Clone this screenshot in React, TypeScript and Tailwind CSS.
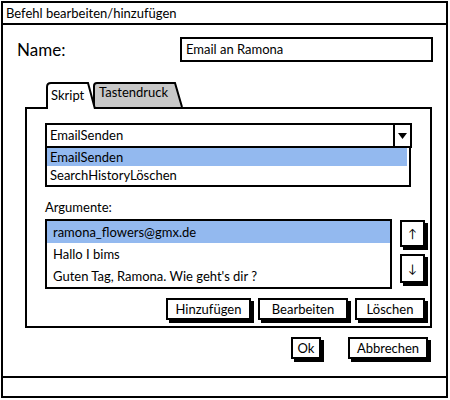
import * as React from 'react';

const Btn: React.FC<{ label: string; w: string }> = ({ label, w }) => (
  <div
    className={`${w} h-[22px] border-2 border-black bg-white shadow-[3px_3px_0_#000] flex items-center justify-center text-[13px] leading-none`}
  >
    {label}
  </div>
);

const App: React.FC = () => {
  return (
    <div className="w-[450px] h-[400px] bg-white p-[1px] text-black font-['Lato','Liberation_Sans',sans-serif]">
      <div className="w-[447px] h-[397px] border-2 border-black flex flex-col">
        {/* title bar */}
        <div className="h-[22px] border-b-2 border-black pl-[3px] text-[13px] leading-[20px]">
          Befehl bearbeiten/hinzufügen
        </div>

        <div className="flex-1 flex flex-col">
          {/* name row */}
          <div className="mt-[12px] h-[25px] flex items-center">
            <div className="ml-[14px] text-[17px] leading-none">Name:</div>
            <div className="ml-auto mr-[13px] w-[253px] h-[25px] border-2 border-black flex items-center px-[4px] text-[13px]">
              Email an Ramona
            </div>
          </div>

          {/* tabs */}
          <div className="mt-[20px] -mb-[2px] ml-[43px] flex items-start">
            <div className="relative z-10 w-[50px] h-[27px]">
              <svg className="absolute inset-0" width="50" height="27" viewBox="0 0 50 27">
                <path d="M1,27 L1,5 Q1,1 5,1 L42,1 L49,27" fill="#fff" stroke="#000" strokeWidth="2" />
              </svg>
              <div className="relative pl-[5px] pt-[7px] text-[13px] leading-none">Skript</div>
            </div>
            <div className="relative -ml-[3px] w-[90px] h-[25px]">
              <svg className="absolute inset-0" width="90" height="25" viewBox="0 0 90 25">
                <path d="M1,25 L1,4 Q1,1 4,1 L82,1 L89,25" fill="#c8c8c8" stroke="#000" strokeWidth="2" />
              </svg>
              <div className="relative pl-[6px] pt-[4px] text-[13px] leading-none">Tastendruck</div>
            </div>
          </div>

          {/* tab panel */}
          <div className="ml-[22px] w-[407px] h-[221px] border-2 border-black pl-[18px] pt-[14px] flex flex-col">
            {/* combo */}
            <div className="w-[367px] h-[25px] border-2 border-black flex">
              <div className="flex-1 flex items-center px-[3px] text-[13px]">EmailSenden</div>
              <div className="w-[17px] border-l-2 border-black flex items-center justify-center">
                <svg width="9" height="6" viewBox="0 0 9 6">
                  <path d="M0,0 L9,0 L4.5,6 Z" fill="#000" />
                </svg>
              </div>
            </div>
            <div className="w-[366px] border-2 border-t-0 border-black text-[13px] leading-[18px] pb-[1px]">
              <div className="bg-[#93b9ef] mr-[2px] px-[3px]">EmailSenden</div>
              <div className="px-[3px]">SearchHistoryLöschen</div>
            </div>

            <div className="mt-[12px] text-[13px] leading-[16px]">Argumente:</div>

            <div className="mt-[4px] flex items-start">
              <div className="w-[347px] h-[70px] border-2 border-black text-[13px] leading-[22px]">
                <div className="bg-[#93b9ef] px-[6px]">ramona_flowers@gmx.de</div>
                <div className="px-[6px]">Hallo I bims</div>
                <div className="px-[6px]">Guten Tag, Ramona. Wie geht's dir ?</div>
              </div>
              <div className="ml-[8px] mt-[1px] flex flex-col gap-[7px]">
                <div className="w-[25px] h-[27px] border-2 border-black shadow-[3px_3px_0_#000] flex items-center justify-center text-[12px]">
                  ↑
                </div>
                <div className="w-[25px] h-[29px] border-2 border-black shadow-[3px_3px_0_#000] flex items-center justify-center text-[12px]">
                  ↓
                </div>
              </div>
            </div>

            <div className="mt-[9px] mr-[5px] flex justify-end gap-[7px]">
              <Btn label="Hinzufügen" w="w-[85px]" />
              <Btn label="Bearbeiten" w="w-[90px]" />
              <Btn label="Löschen" w="w-[70px]" />
            </div>
          </div>

          {/* ok / cancel */}
          <div className="mt-[9px] mr-[18px] flex justify-end gap-[27px]">
            <Btn label="Ok" w="w-[30px]" />
            <Btn label="Abbrechen" w="w-[80px]" />
          </div>
        </div>

        {/* status bar */}
        <div className="h-[20px] border-t-2 border-black" />
      </div>
    </div>
  );
};

export default App;
